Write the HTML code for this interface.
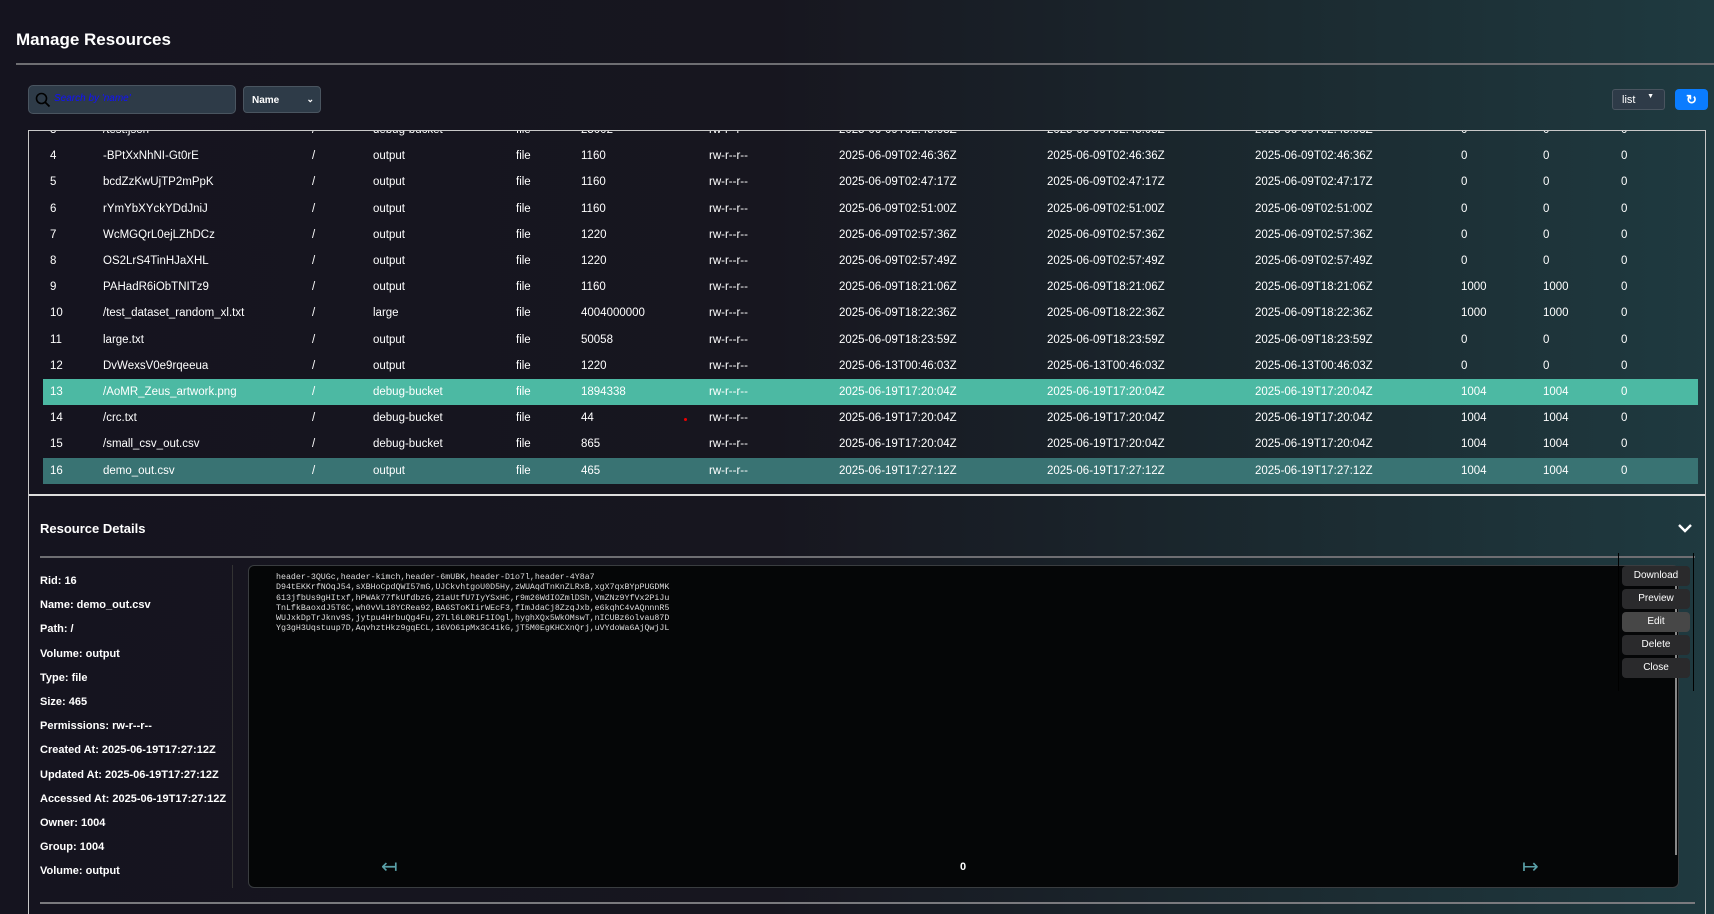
<!DOCTYPE html>
<html><head><meta charset="utf-8"><style>
*{margin:0;padding:0;box-sizing:border-box}
body{width:1714px;height:914px;overflow:hidden;background:linear-gradient(90deg,#15141f 0%,#17161f 45%,#1b2a30 75%,#1f3a40 100%);font-family:"Liberation Sans",sans-serif;color:#fff;position:relative}
.a{position:absolute}
.title{left:16px;top:30px;font-size:17px;font-weight:bold}
.hl{left:16px;top:63px;width:1698px;height:2px;background:#6e6e72}
.search{left:28px;top:85px;width:208px;height:29px;background:#2e3b48;border:1px solid #4a5560;border-radius:5px}
.search span{position:absolute;left:25px;top:7px;color:#1010ff;font-style:italic;font-size:10px}
.sel{left:243px;top:86px;width:78px;height:27px;background:#2e3b48;border:1px solid #4a5560;border-radius:4px;font-size:10px;font-weight:bold;padding:8px 0 0 8px}
.sel i{position:absolute;right:6px;top:7px;font-style:normal;font-size:9px}
.lst{left:1612px;top:89px;width:53px;height:21px;background:#2e3b48;border:1px solid #4a5560;border-radius:3px;font-size:11px;padding:4px 0 0 9px}
.lst i{position:absolute;right:10px;top:3px;font-size:7px;font-style:normal}
.btn{left:1675px;top:89px;width:33px;height:21px;background:#0a7cff;border-radius:4px;font-size:13px;font-weight:bold;text-align:center;line-height:21px}
.box{left:28px;top:130px;width:1678px;height:366px;border:1px solid #c8c8c8;border-bottom:2px solid #ddd;overflow:hidden}
.row{position:absolute;left:14px;width:1655px;height:26px;font-size:11.5px;line-height:26px}
.row span{position:absolute;white-space:nowrap}
.vl{width:1px;background:#c8c8c8}
.info{left:40px;font-size:11px;font-weight:bold}
.pre{left:248px;top:565px;width:1431px;height:323px;background:#050607;border:1px solid #3a3d40;border-radius:6px}
.mono{left:276px;top:573px;font-family:"Liberation Mono",monospace;font-size:8.3px;line-height:10.3px;color:#ddd;white-space:pre}
.b{left:1622px;width:68px;height:20px;background:#2a2a2c;border-radius:4px;font-size:10px;text-align:center;line-height:20px}
</style></head><body>
<div class="a title">Manage Resources</div>
<div class="a hl"></div>
<div class="a search"><svg class="a" style="left:6px;top:6px" width="16" height="16" viewBox="0 0 16 16"><circle cx="6.5" cy="6.5" r="5" stroke="#000" stroke-width="1.6" fill="none"/><path d="M10.2 10.2L14.5 14.5" stroke="#000" stroke-width="1.8"/></svg><span>Search by 'name'</span></div>
<div class="a sel">Name<i>⌄</i></div>
<div class="a lst">list<i>▼</i></div>
<div class="a btn">↻</div>
<div class="a box" id="box"></div>
<div class="a vl" style="left:28px;top:495px;height:419px"></div>
<div class="a vl" style="left:1705px;top:495px;height:419px"></div>
<div class="a" style="left:40px;top:521px;font-size:13px;font-weight:bold">Resource Details</div>
<svg class="a" style="left:1677px;top:522px" width="16" height="12" viewBox="0 0 16 12"><path d="M2 3L8 9L14 3" stroke="#fff" stroke-width="2.4" fill="none"/></svg>
<div class="a" style="left:40px;top:556px;width:1655px;height:2px;background:#6e6e72"></div>
<div class="a" style="left:232px;top:565px;width:1px;height:323px;background:#333"></div>
<div class="a pre"></div>
<div class="a" style="left:1675px;top:570px;width:2px;height:285px;background:#888"></div>
<div class="a mono">header-3QUGc,header-kimch,header-6mUBK,header-D1o7l,header-4Y8a7
D94tEKKrfNOqJ54,sXBHoCpdQWI57mG,UJCkvhtgoU0D5Hy,zWUAqdTnKnZLRxB,xgX7qxBYpPUGDMK
613jfbUs9gHItxf,hPWAk77fkUfdbzG,21aUtfU7IyYSxHC,r9m26WdIOZmlDSh,VmZNz9YfVx2PiJu
TnLfkBaoxdJ5T6C,wh0vVL18YCRea92,BA6SToKIirWEcF3,fImJdaCj8ZzqJxb,e6kqhC4vAQnnnR5
WUJxkDpTrJknv9S,jytpu4HrbuQg4Fu,27Ll6L0RiF1IOgl,hyghXQx5WkOMswT,nICUBz6olvau87D
Yg3gH3Uqstuup7D,AqvhztHkz9gqECL,16VO61pMx3C41kG,jT5M0EgKHCXnQrj,uVYdoWa6AjQwjJL</div>
<div class="a" style="left:1618px;top:553px;width:76px;height:138px;border:1px solid #000;border-top:none;border-bottom:none"></div>
<div class="a b" style="top:566px">Download</div>
<div class="a b" style="top:589px">Preview</div>
<div class="a b" style="top:612px;background:#474747">Edit</div>
<div class="a b" style="top:635px">Delete</div>
<div class="a b" style="top:658px">Close</div>
<div class="a" style="left:381px;top:854px;color:#5aa0a8;font-size:20px">↤</div>
<div class="a" style="left:1522px;top:854px;color:#5aa0a8;font-size:20px">↦</div>
<div class="a" style="left:960px;top:861px;font-size:11px;font-weight:bold">0</div>
<div class="a" style="left:40px;top:902px;width:1655px;height:2px;background:#7a7a7e"></div>
<div id="info"></div>
<div class="a" style="left:684px;top:418px;width:3px;height:3px;background:#e00;border-radius:50%"></div>
<script>
var rows=[["3","/test.json","debug-bucket","file","25002","2025-06-09T02:45:03Z","0","0"],
["4","-BPtXxNhNI-Gt0rE","output","file","1160","2025-06-09T02:46:36Z","0","0"],
["5","bcdZzKwUjTP2mPpK","output","file","1160","2025-06-09T02:47:17Z","0","0"],
["6","rYmYbXYckYDdJniJ","output","file","1160","2025-06-09T02:51:00Z","0","0"],
["7","WcMGQrL0ejLZhDCz","output","file","1220","2025-06-09T02:57:36Z","0","0"],
["8","OS2LrS4TinHJaXHL","output","file","1220","2025-06-09T02:57:49Z","0","0"],
["9","PAHadR6iObTNITz9","output","file","1160","2025-06-09T18:21:06Z","1000","1000"],
["10","/test_dataset_random_xl.txt","large","file","4004000000","2025-06-09T18:22:36Z","1000","1000"],
["11","large.txt","output","file","50058","2025-06-09T18:23:59Z","0","0"],
["12","DvWexsV0e9rqeeua","output","file","1220","2025-06-13T00:46:03Z","0","0"],
["13","/AoMR_Zeus_artwork.png","debug-bucket","file","1894338","2025-06-19T17:20:04Z","1004","1004"],
["14","/crc.txt","debug-bucket","file","44","2025-06-19T17:20:04Z","1004","1004"],
["15","/small_csv_out.csv","debug-bucket","file","865","2025-06-19T17:20:04Z","1004","1004"],
["16","demo_out.csv","output","file","465","2025-06-19T17:27:12Z","1004","1004"]];
var xs=[49,102,311,372,515,580,708,838,1046,1254,1460,1542,1620];
var h="";
rows.forEach(function(r,i){
 var top=(i*26.2)-14;
 var bg=r[0]=="13"?"#4cb9a3":(r[0]=="16"?"#397373":"transparent");
 var c=[r[0],r[1],"/",r[2],r[3],r[4],"rw-r--r--",r[5],r[5],r[5],r[6],r[7],"0"];
 h+='<div class="row" style="top:'+top+'px;background:'+bg+'">';
 c.forEach(function(t,j){h+='<span style="left:'+(xs[j]-28-14)+'px">'+t+'</span>'});
 h+='</div>';
});
document.getElementById("box").innerHTML=h;
var inf=["Rid: 16","Name: demo_out.csv","Path: /","Volume: output","Type: file","Size: 465","Permissions: rw-r--r--","Created At: 2025-06-19T17:27:12Z","Updated At: 2025-06-19T17:27:12Z","Accessed At: 2025-06-19T17:27:12Z","Owner: 1004","Group: 1004","Volume: output"];
var g="";inf.forEach(function(t,i){g+='<div class="a info" style="top:'+(575+i*24.2)+'px">'+t+'</div>'});
document.getElementById("info").innerHTML=g;
</script>
</body></html>
